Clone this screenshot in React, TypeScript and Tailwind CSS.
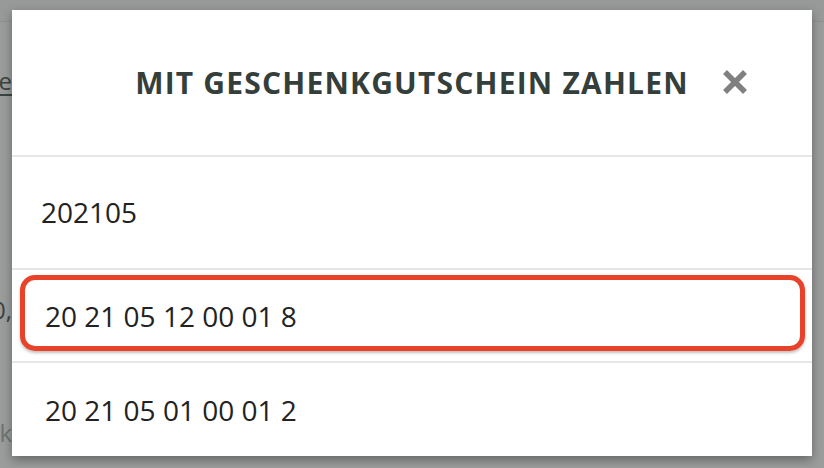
export default function App() {
  const codes = ["20 21 05 12 00 01 8", "20 21 05 01 00 01 2"];

  return (
    <div className="relative h-[468px] w-[824px] overflow-hidden bg-[#9a9d9c] font-['Open_Sans',sans-serif]">
      {/* page behind the overlay */}
      <div className="h-[22px] border-b border-[#8e9190] bg-[#979a99]" />
      <div className="w-[12px] overflow-hidden text-[#3c4340]">
        <div className="mt-[46px] flex justify-end whitespace-nowrap border-b-2 border-[#3b4541] text-[24px] leading-[26px]">
          Karte
        </div>
        <div className="mt-[200px] flex justify-end whitespace-nowrap text-[24px] leading-[28px]">
          10,
        </div>
        <div className="mt-[95px] flex justify-end whitespace-nowrap text-[24px] leading-[28px] text-[#6f7471]">
          Dank
        </div>
      </div>

      {/* modal */}
      <div className="absolute left-[12px] top-[10px] flex h-[446px] w-[800px] flex-col bg-white shadow-[0_4px_10px_rgba(0,0,0,0.35)]">
        <div className="relative flex h-[145px] shrink-0 items-center justify-center">
          <h2 className="text-[30px] font-bold uppercase tracking-[0.04em] text-[#343e3a]">
            Mit Geschenkgutschein zahlen
          </h2>
          <button className="absolute right-[64px] top-[59px] text-[#808080]">
            <svg width="26" height="26" viewBox="0 0 26 26">
              <path d="M3 3 L23 23 M23 3 L3 23" stroke="currentColor" strokeWidth="5.5" />
            </svg>
          </button>
        </div>
        <div className="h-[2px] bg-[#e6e6e6]" />
        <div className="flex h-[111px] items-center pb-[2px] pl-[29px] text-[28px] text-[#222]">202105</div>
        <div className="h-[2px] bg-[#e6e6e6]" />
        <div className="h-[91px] pl-[8px] pr-[7px] pt-[5px]">
          <div className="flex h-[76px] items-center rounded-[15px] border-[5px] border-[#e8432a] pl-[20px] pt-[5px] text-[28px] text-[#222] shadow-[0_2px_3px_rgba(0,0,0,0.25)]">
            {codes[0]}
          </div>
        </div>
        <div className="h-[2px] bg-[#e6e6e6]" />
        <div className="flex flex-1 items-center pl-[33px] text-[28px] text-[#222]">{codes[1]}</div>
      </div>
    </div>
  );
}
